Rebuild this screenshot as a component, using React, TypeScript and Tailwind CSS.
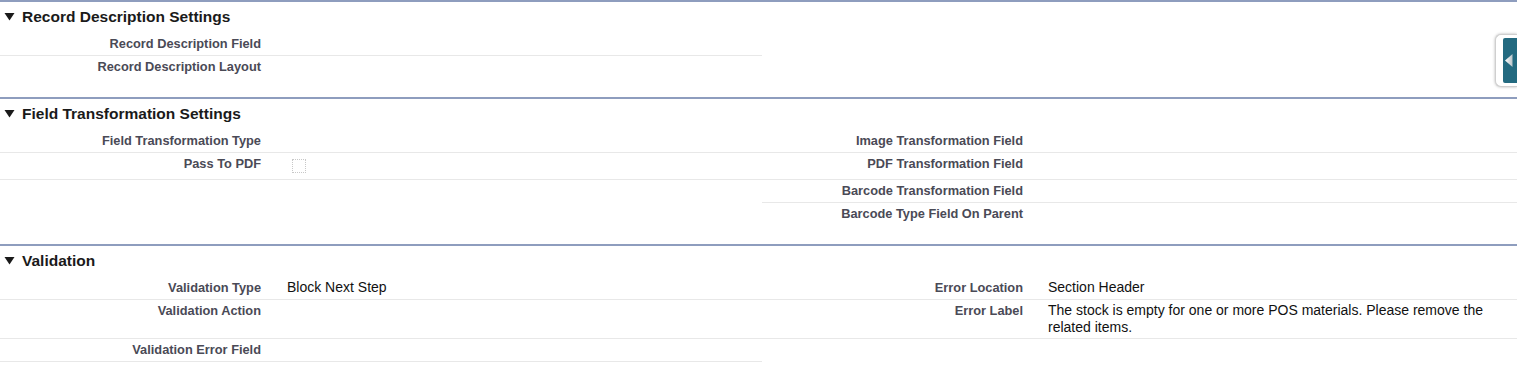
import React from "react";

type Cell = { label?: string; value?: React.ReactNode; border?: boolean; checkbox?: boolean };
type Row = { left: Cell; right: Cell };

const Triangle = () => (
  <svg width="11" height="9" viewBox="0 0 11 9" className="shrink-0">
    <polygon points="0.5,1 10.5,1 5.5,8.5" fill="#1a1a1a" />
  </svg>
);

function Half({ cell, right }: { cell: Cell; right?: boolean }) {
  return (
    <div className={`flex ${cell.border ? "border-b border-[#e8e8e8]" : ""}`}>
      <div className="w-[272px] shrink-0 text-right pr-[11px] pt-[3px] pb-[3px] leading-[16px] text-[12.8px] font-bold text-[#4a4a56]">
        {cell.label}
      </div>
      <div
        className={`flex-1 ${right ? "pl-[14px] pr-[20px]" : "pl-[15px]"} ${
          cell.checkbox ? "pt-[6px] pb-[6px]" : "pt-[2px] pb-[2px]"
        } leading-[17px] text-[14px] text-[#111]`}
      >
        {cell.checkbox ? (
          <div className="ml-[5px] w-[14px] h-[14px] border border-dotted border-[#c8c8c8]" />
        ) : (
          cell.value
        )}
      </div>
    </div>
  );
}

function Section({ title, rows }: { title: string; rows: Row[] }) {
  return (
    <div className="border-t-2 border-[#8e9dbe] pb-[19px]">
      <div className="h-[31px] flex items-center pl-[4px] gap-[7px] pb-[2px]">
        <Triangle />
        <h3 className="text-[15.5px] font-bold text-[#1a1a1a] leading-none">{title}</h3>
      </div>
      <div className="grid grid-cols-[762px_1fr]">
        {rows.map((r, i) => (
          <React.Fragment key={i}>
            <Half cell={r.left} />
            <Half cell={r.right} right />
          </React.Fragment>
        ))}
      </div>
    </div>
  );
}

export default function App() {
  return (
    <div
      className="relative w-[1517px] h-[366px] overflow-hidden bg-white"
      style={{ fontFamily: '"Liberation Sans", Arial, sans-serif' }}
    >
      <Section
        title="Record Description Settings"
        rows={[
          { left: { label: "Record Description Field", border: true }, right: {} },
          { left: { label: "Record Description Layout" }, right: {} },
        ]}
      />
      <Section
        title="Field Transformation Settings"
        rows={[
          {
            left: { label: "Field Transformation Type", border: true },
            right: { label: "Image Transformation Field", border: true },
          },
          {
            left: { label: "Pass To PDF", border: true, checkbox: true },
            right: { label: "PDF Transformation Field", border: true },
          },
          { left: {}, right: { label: "Barcode Transformation Field", border: true } },
          { left: {}, right: { label: "Barcode Type Field On Parent" } },
        ]}
      />
      <Section
        title="Validation"
        rows={[
          {
            left: { label: "Validation Type", value: "Block Next Step", border: true },
            right: { label: "Error Location", value: "Section Header", border: true },
          },
          {
            left: { label: "Validation Action", border: true },
            right: {
              label: "Error Label",
              value:
                "The stock is empty for one or more POS materials. Please remove the related items.",
              border: true,
            },
          },
          { left: { label: "Validation Error Field", border: true }, right: {} },
        ]}
      />

      {/* collapsed side tab */}
      <div className="absolute right-0 top-[34px] w-[22px] h-[53px] bg-white rounded-l-[6px] border border-r-0 border-[#cfcfcf] shadow-[0_0_3px_rgba(0,0,0,0.3)] pl-[7px] py-[3px]">
        <div className="h-full bg-[#236a80] rounded-l-[2px] flex items-center pl-[2px]">
          <svg width="8" height="13" viewBox="0 0 8 13">
            <defs>
              <linearGradient id="tg" x1="0" y1="0" x2="1" y2="0">
                <stop offset="0" stopColor="#ffffff" />
                <stop offset="1" stopColor="#b9c4c9" />
              </linearGradient>
            </defs>
            <polygon points="0,6.5 7.5,0 7.5,13" fill="url(#tg)" />
          </svg>
        </div>
      </div>
    </div>
  );
}
